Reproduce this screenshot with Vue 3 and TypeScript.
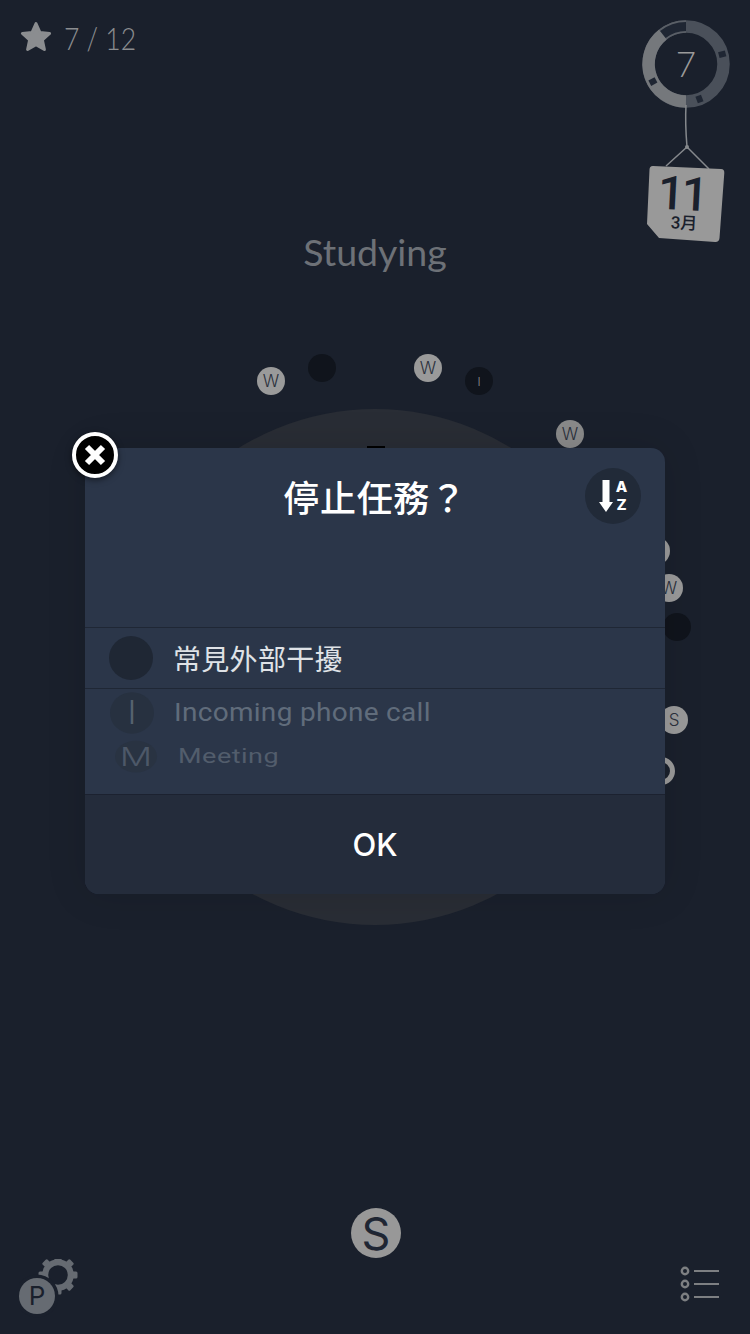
<template>
  <div class="screen">
    <!-- interruption marks orbiting the timer dial -->
    <div class="dial"></div>
    <div class="dial-notch"></div>
    <div
      v-for="(b, i) in bubbles"
      :key="i"
      class="bubble"
      :class="b.cls"
      :style="{ left: b.x - 14 + 'px', top: b.y - 14 + 'px' }"
    >{{ b.label }}</div>

    <header class="top">
      <div class="score">
        <svg class="star" width="34" height="32" viewBox="0 0 34 32">
          <path d="M17 3.500l4 9 9.600 1-7.200 6.500 2 9.500-8.400-4.900-8.400 4.900 2-9.500-7.200-6.500 9.600-1z" fill="#8b8d90" stroke="#8b8d90" stroke-width="3" stroke-linejoin="round" />
        </svg>
        <span class="score-text">7 / 12</span>
      </div>
      <h1 class="task">Studying</h1>
      <svg class="hanger" width="100" height="230" viewBox="0 0 100 230">
        <!-- pomodoro ring -->
        <circle cx="46" cy="49" r="37.500" fill="none" stroke="#4a505a" stroke-width="12.500" />
        <path d="M46 86.500A37.500 37.500 0 0 1 22.900 19.500" fill="none" stroke="#75787c" stroke-width="12.500" />
        <path d="M22.900 19.500A37.500 37.500 0 0 1 46 11.500" fill="none" stroke="#5a5f67" stroke-width="12.500" />
        <path d="M22.900 19.500A37.500 37.500 0 0 1 46 11.500" fill="none" stroke="#1f2633" stroke-width="9" />
        <g fill="#1f2633">
          <rect x="-3" y="-41" width="6" height="7" transform="translate(46 49) rotate(75)" />
          <rect x="-3" y="-41" width="6" height="7" transform="translate(46 49) rotate(159)" />
          <rect x="-3" y="-41" width="6" height="7" transform="translate(46 49) rotate(242)" />
        </g>
        <text x="46" y="62" class="ring-num">7</text>
        <!-- string and tag -->
        <path d="M46 90q-1 18 1 42" fill="none" stroke="#85888c" stroke-width="1.500" />
        <path d="M26 151l21-19 22 22" fill="none" stroke="#85888c" stroke-width="1.500" />
        <circle cx="47" cy="132" r="2" fill="#85888c" />
        <path d="M13 151L81 154Q84.500 154.200 84.300 158L79.500 223Q79.200 227.200 75 227L19 223L7 209L9.500 154.500Q9.700 150.800 13 151z" fill="#999999" />
        <g transform="rotate(3 45 190)">
          <text x="41" y="195" class="tag-day">11</text>
          <text x="45" y="214" class="tag-month">3月</text>
        </g>
      </svg>
    </header>

    <div class="spacer"></div>

    <footer class="bottom">
      <svg class="settings" width="70" height="70" viewBox="0 0 70 70">
        <g transform="translate(39 16)">
          <circle r="12.800" fill="none" stroke="#666b72" stroke-width="6" />
          <rect
            v-for="a in gearTeeth"
            :key="a"
            x="-3.500"
            y="-19.500"
            width="7"
            height="7"
            rx="1.500"
            fill="#666b72"
            :transform="'rotate(' + a + ')'"
          />
        </g>
        <circle cx="18" cy="37" r="21.500" fill="#1a202c" />
        <circle cx="18" cy="37" r="18" fill="#666b72" />
        <text x="18" y="46" class="p-mark">P</text>
      </svg>
      <div class="start">S</div>
      <svg class="list" width="40" height="36" viewBox="0 0 40 36">
        <g fill="none" stroke="#7d7f82">
          <circle cx="5" cy="5" r="3.200" stroke-width="2.400" />
          <circle cx="5" cy="18" r="3.200" stroke-width="2.400" />
          <circle cx="5" cy="31" r="3.200" stroke-width="2.400" />
          <path d="M14 5h25M14 18h25M14 31h25" stroke-width="2" />
        </g>
      </svg>
    </footer>

    <div class="overlay">
      <section class="modal">
        <button class="close" type="button">
          <svg width="26" height="26" viewBox="0 0 26 26">
            <path d="M5 5l16 16M21 5L5 21" stroke="#fff" stroke-width="6" />
          </svg>
        </button>
        <div class="modal-head">
          <h2 class="modal-title">停止任務？</h2>
          <button class="sort" type="button">
            <svg width="14" height="32" viewBox="0 0 14 32">
              <path d="M3.500 0h7v22h3.500l-7 10-7-10h3.500z" fill="#fff" />
            </svg>
            <span class="sort-az">
              <span class="sort-letter">A</span>
              <span class="sort-letter">Z</span>
            </span>
          </button>
        </div>
        <div class="picker">
          <div class="row row--active">
            <span class="badge"></span>
            <span class="row-label">常見外部干擾</span>
          </div>
          <div class="row row--near">
            <span class="badge badge--near">I</span>
            <span class="row-label">Incoming phone call</span>
          </div>
          <div class="row row--far">
            <span class="badge badge--far">M</span>
            <span class="row-label">Meeting</span>
          </div>
        </div>
        <div class="modal-foot">OK</div>
      </section>
    </div>
  </div>
</template>

<script setup lang="ts">
interface Bubble {
  x: number
  y: number
  label: string
  cls: string
}

const bubbles: Bubble[] = [
  { x: 271, y: 381, label: 'W', cls: 'bubble--done' },
  { x: 322, y: 368, label: '', cls: 'bubble--dark' },
  { x: 428, y: 368, label: 'W', cls: 'bubble--done' },
  { x: 479, y: 381, label: 'I', cls: 'bubble--dark' },
  { x: 570, y: 434, label: 'W', cls: 'bubble--dim' },
  { x: 656, y: 551, label: '', cls: 'bubble--done' },
  { x: 669, y: 588, label: 'W', cls: 'bubble--done' },
  { x: 677, y: 627, label: '', cls: 'bubble--dark' },
  { x: 674, y: 720, label: 'S', cls: 'bubble--done' },
  { x: 661, y: 771, label: '', cls: 'bubble--done bubble--hollow' },
]

const gearTeeth = [0, 45, 90, 135, 180, 225, 270, 315]
</script>

<style>
html,
body {
  margin: 0;
  background: #1a202c;
}
</style>

<style scoped>
.screen {
  position: relative;
  width: 750px;
  height: 1334px;
  overflow: hidden;
  display: flex;
  flex-direction: column;
  background: #1a202c;
  font-family: Inter, "Noto Sans CJK TC", sans-serif;
}

.dial {
  position: absolute;
  left: 117px;
  top: 409px;
  width: 516px;
  height: 516px;
  border-radius: 50%;
  background: #292d35;
}
.dial-notch {
  position: absolute;
  left: 367px;
  top: 446px;
  width: 18px;
  height: 3px;
  background: #000;
}

.bubble {
  position: absolute;
  width: 28px;
  height: 28px;
  border-radius: 50%;
  display: flex;
  align-items: center;
  justify-content: center;
  font-size: 17px;
  font-weight: 300;
  color: #2b303c;
}
.bubble--done { background: #9a9a9a; }
.bubble--dim { background: #8a8a8a; }
.bubble--dark { background: #10141c; color: #8a8c90; font-size: 12px; }
.bubble--hollow { background: none; border: 5px solid #9a9a9a; box-sizing: border-box; }

/* Top area */
.top {
  display: grid;
  grid-template-columns: minmax(0, 1fr) auto minmax(0, 1fr);
  align-items: start;
  padding: 15px 10px 0;
}
.score {
  display: flex;
  align-items: flex-start;
  gap: 11px;
  padding: 5px 0 0 9px;
}
.star { display: block; flex: none; }
.score-text {
  font-family: Lato, sans-serif;
  font-size: 32px;
  line-height: 36px;
  font-weight: 300;
  color: #8b8d90;
  white-space: nowrap;
  transform: scaleX(0.83);
  transform-origin: left center;
}
.task {
  margin: 210px 0 0;
  font-family: Lato, sans-serif;
  font-size: 37.500px;
  line-height: 54px;
  font-weight: 400;
  color: #6d7177;
}
.hanger { justify-self: end; display: block; }
.ring-num {
  font-family: Lato, sans-serif;
  font-size: 35px;
  font-weight: 300;
  fill: #9a9a9a;
  text-anchor: middle;
}
.tag-day {
  font-family: Roboto, sans-serif;
  font-size: 47px;
  letter-spacing: -3px;
  fill: #1a202c;
  text-anchor: middle;
  font-weight: 500;
}
.tag-month {
  font-family: Roboto, "Noto Sans CJK TC", sans-serif;
  font-size: 17px;
  fill: #1a202c;
  text-anchor: middle;
  font-weight: 500;
}

.spacer { flex: 1; }

/* Bottom area */
.bottom {
  display: grid;
  grid-template-columns: minmax(0, 1fr) auto minmax(0, 1fr);
  align-items: end;
  padding: 0 30px 5px;
}
.settings { display: block; margin-left: -11px; }
.start {
  width: 50px;
  height: 50px;
  margin: 0 0 71px 2px;
  border-radius: 50%;
  background: #989898;
  color: #1f2633;
  display: flex;
  align-items: center;
  justify-content: center;
  font-size: 45px;
  font-weight: 400;
  line-height: 1;
}
.list { justify-self: end; display: block; margin-bottom: 27px; }
.p-mark {
  font-family: Inter, sans-serif;
  font-size: 26px;
  font-weight: 400;
  fill: #1a202c;
  text-anchor: middle;
}

/* Stop dialog */
.overlay {
  position: absolute;
  left: 0;
  right: 0;
  top: 448px;
  display: flex;
  justify-content: center;
}
.modal {
  position: relative;
  width: 580px;
  height: 446px;
  border-radius: 14px;
  background: #2b3649;
  box-shadow: 0 0 40px rgba(10, 13, 20, 0.12);
  display: flex;
  flex-direction: column;
}
.close {
  position: absolute;
  left: -13px;
  top: -16px;
  width: 46px;
  height: 46px;
  padding: 0;
  box-sizing: border-box;
  border: 4px solid #fff;
  border-radius: 50%;
  background: #000;
  box-shadow: 0 2px 6px rgba(0, 0, 0, 0.5);
  display: flex;
  align-items: center;
  justify-content: center;
}
.modal-head {
  position: relative;
  height: 179px;
  border-bottom: 1px solid #1f2735;
}
.modal-title {
  margin: 26px 0 0;
  text-align: center;
  font-size: 36px;
  line-height: 50px;
  font-weight: 500;
  letter-spacing: 0.7px;
  color: #fff;
}
.sort {
  position: absolute;
  right: 24px;
  top: 20px;
  width: 56px;
  height: 56px;
  padding: 0;
  border: 0;
  border-radius: 50%;
  background: #212a38;
  display: flex;
  align-items: center;
  justify-content: center;
  gap: 3px;
}
.sort-az {
  display: flex;
  flex-direction: column;
}
.sort-letter {
  display: block;
  font-family: Inter, sans-serif;
  font-size: 15px;
  line-height: 18px;
  font-weight: 800;
  color: #fff;
  text-align: center;
}

/* Wheel picker: rows shrink as they turn away from the selection */
.picker {
  flex: 1;
  overflow: hidden;
}
.row {
  display: flex;
  align-items: center;
  padding-left: 24px;
}
.row--active {
  height: 60px;
  border-bottom: 1px solid #1f2735;
  gap: 21px;
}
.row--near {
  height: 47px;
  gap: 20px;
  padding-left: 25px;
  transform: scaleY(0.94);
}
.row--far {
  height: 46px;
  margin-top: 4px;
  gap: 21px;
  padding-left: 30px;
  transform: scaleY(0.72);
  transform-origin: center top;
}
.badge {
  flex: none;
  width: 44px;
  height: 44px;
  border-radius: 50%;
  background: #1f2734;
  display: flex;
  align-items: center;
  justify-content: center;
}
.badge--near {
  background: #273140;
  color: #56626f;
  font-size: 34px;
  font-weight: 300;
}
.badge--far {
  width: 42px;
  background: #293342;
  color: #4d5868;
  font-size: 36px;
  font-weight: 300;
}
.row-label {
  font-family: Roboto, "Noto Sans CJK TC", sans-serif;
}
.row--active .row-label {
  margin-left: -1px;
  font-size: 28px;
  letter-spacing: 0.3px;
  color: #dfe2e6;
  font-family: "Noto Sans CJK TC", sans-serif;
}
.row--near .row-label {
  font-size: 28px;
  color: #606c7b;
  letter-spacing: 0.3px;
}
.row--far .row-label {
  font-size: 27px;
  color: #525d6c;
  letter-spacing: 0.5px;
}
.modal-foot {
  height: 99px;
  border-top: 1px solid #1c2230;
  border-radius: 0 0 14px 14px;
  background: #242c3b;
  display: flex;
  align-items: center;
  justify-content: center;
  font-size: 31px;
  font-weight: 500;
  color: #fff;
}
</style>
